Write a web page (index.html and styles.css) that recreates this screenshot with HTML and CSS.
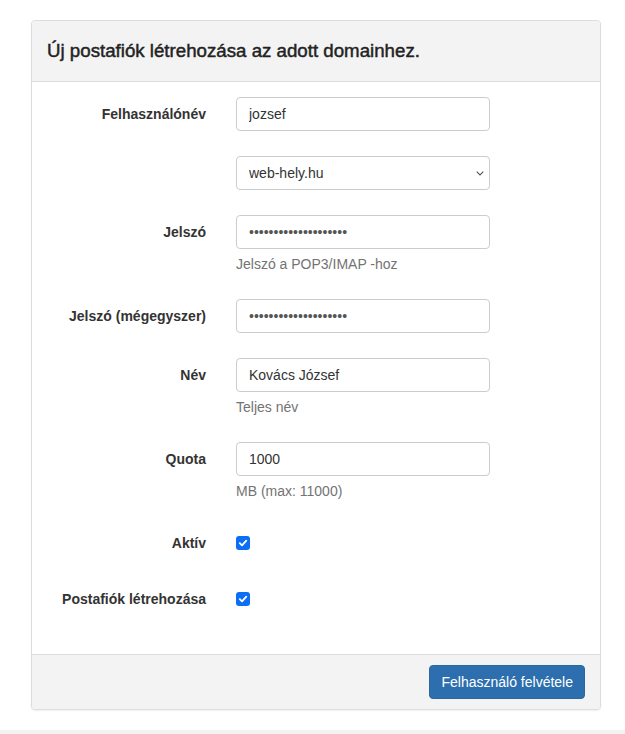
FILE: index.html
```html
<!DOCTYPE html>
<html lang="hu">
<head>
<meta charset="utf-8">
<title>Új postafiók</title>
<link rel="stylesheet" href="styles.css">
</head>
<body>
<div class="page">
  <form class="panel">
    <div class="panel-heading">Új postafiók létrehozása az adott domainhez.</div>
    <div class="panel-body">
      <div class="row">
        <label class="label">Felhasználónév</label>
        <div class="control"><input class="input" type="text" value="jozsef"></div>
      </div>
      <div class="row">
        <div class="label"></div>
        <div class="control">
          <div class="select-wrap">
            <select class="input select"><option>web-hely.hu</option></select>
            <svg class="chevron" width="8" height="5" viewBox="0 0 8 5"><path d="M0.7 0.7 L4 4 L7.3 0.7" fill="none" stroke="#555" stroke-width="1.1"/></svg>
          </div>
        </div>
      </div>
      <div class="row">
        <label class="label">Jelszó</label>
        <div class="control">
          <input class="input pw" type="password" value="aaaaaaaaaaaaaaaaaaaa">
          <div class="help">Jelszó a POP3/IMAP -hoz</div>
        </div>
      </div>
      <div class="row">
        <label class="label">Jelszó (mégegyszer)</label>
        <div class="control"><input class="input pw" type="password" value="aaaaaaaaaaaaaaaaaaaa"></div>
      </div>
      <div class="row">
        <label class="label">Név</label>
        <div class="control">
          <input class="input" type="text" value="Kovács József">
          <div class="help">Teljes név</div>
        </div>
      </div>
      <div class="row">
        <label class="label">Quota</label>
        <div class="control">
          <input class="input" type="text" value="1000">
          <div class="help">MB (max: 11000)</div>
        </div>
      </div>
      <div class="row row-check">
        <label class="label">Aktív</label>
        <div class="control check-control">
          <span class="check"><svg width="10" height="10" viewBox="0 0 10 10"><path d="M1.8 5.2 L4 7.4 L8.3 2.6" fill="none" stroke="#fff" stroke-width="1.8" stroke-linecap="round" stroke-linejoin="round"/></svg></span>
        </div>
      </div>
      <div class="row row-check">
        <label class="label">Postafiók létrehozása</label>
        <div class="control check-control">
          <span class="check"><svg width="10" height="10" viewBox="0 0 10 10"><path d="M1.8 5.2 L4 7.4 L8.3 2.6" fill="none" stroke="#fff" stroke-width="1.8" stroke-linecap="round" stroke-linejoin="round"/></svg></span>
        </div>
      </div>
    </div>
    <div class="panel-footer">
      <button class="btn" type="button">Felhasználó felvétele</button>
    </div>
  </form>
</div>
<div class="bottom-bar"></div>
</body>
</html>
```

FILE: styles.css
```css
* { box-sizing: border-box; }
html, body {
  margin: 0;
  padding: 0;
  background: #fff;
  font-family: "Liberation Sans", Arial, Helvetica, sans-serif;
  font-size: 14px;
  line-height: 20px;
  color: #333;
}
.page {
  padding: 20px 24px 20px 31px;
}
.panel {
  width: 570px;
  border: 1px solid #ddd;
  border-radius: 4px;
  background: #fff;
  box-shadow: 0 1px 2px rgba(0,0,0,0.06);
  overflow: hidden;
}
.panel-heading {
  background: #f3f3f3;
  border-bottom: 1px solid #ddd;
  padding: 19px 15px;
  font-size: 18.7px;
  line-height: 22px;
  color: #222;
  -webkit-text-stroke: 0.45px #222;
}
.panel-body {
  padding: 15px 0 16px 0;
}
.row {
  display: flex;
  align-items: flex-start;
  margin-bottom: 25px;
}
.row-check { margin-bottom: 29px; }
.label {
  flex: 0 0 189px;
  padding: 7px 15px 0 15px;
  text-align: right;
  font-weight: bold;
  line-height: 20px;
  min-height: 20px;
}
.control {
  flex: 0 0 284px;
  padding: 0 15px;
}
.input {
  display: block;
  width: 254px;
  height: 34px;
  padding: 6px 12px;
  font-family: inherit;
  font-size: 14px;
  line-height: 20px;
  color: #333;
  background: #fff;
  border: 1px solid #ccc;
  border-radius: 4px;
  outline: none;
  margin: 0;
}
.pw {
  font-size: 14px;
  color: #555;
}
.select-wrap {
  position: relative;
  width: 254px;
}
.select {
  -webkit-appearance: none;
  appearance: none;
  padding-right: 28px;
}
.chevron {
  position: absolute;
  right: 6px;
  top: 15px;
}
.help {
  margin-top: 5px;
  color: #737373;
  line-height: 20px;
}
.check-control {
  padding-top: 10px;
  min-height: 27px;
}
.check {
  display: flex;
  align-items: center;
  justify-content: center;
  width: 14px;
  height: 14px;
  background: #0b6ef5;
  border-radius: 3px;
}
.panel-footer {
  background: #f3f3f3;
  border-top: 1px solid #ddd;
  padding: 10px 15px;
  display: flex;
  justify-content: flex-end;
}
.btn {
  height: 34px;
  padding: 6px 11px;
  font-family: inherit;
  font-size: 14px;
  line-height: 20px;
  color: #fff;
  background: #2d6fae;
  border: 1px solid #2a66a0;
  border-radius: 4px;
  cursor: pointer;
}
.bottom-bar {
  height: 40px;
  background: #f3f3f3;
}
```
